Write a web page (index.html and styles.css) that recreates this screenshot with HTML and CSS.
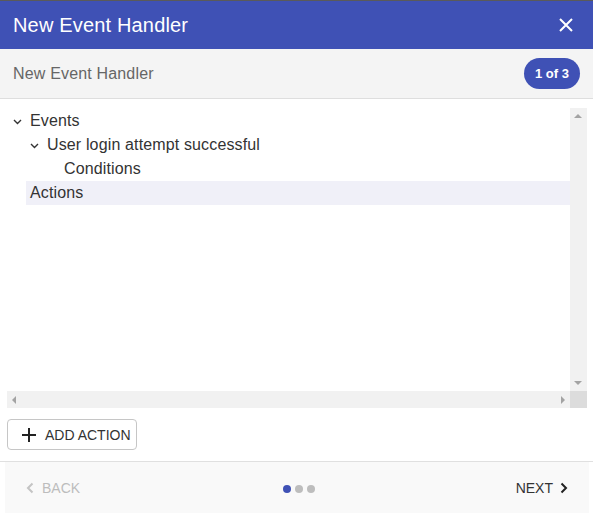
FILE: index.html
```html
<!DOCTYPE html>
<html>
<head>
<meta charset="utf-8">
<link rel="stylesheet" href="styles.css">
</head>
<body>
<div class="dialog">
  <header class="titlebar">
    <h1 class="title">New Event Handler</h1>
    <button class="close" aria-label="Close">
      <svg width="16" height="16" viewBox="0 0 16 16"><path d="M2 2 L14 14 M14 2 L2 14" stroke="#fff" stroke-width="2" fill="none"/></svg>
    </button>
  </header>
  <div class="subbar">
    <span class="subtitle">New Event Handler</span>
    <span class="badge">1 of 3</span>
  </div>
  <div class="content">
    <div class="scrollbox">
      <div class="tree">
        <div class="row lvl0">
          <span class="toggle"><svg width="9" height="6" viewBox="0 0 9 6"><path d="M1 1 L4.5 4.5 L8 1" stroke="#333" stroke-width="1.4" fill="none"/></svg></span>
          <span class="label">Events</span>
        </div>
        <div class="row lvl1">
          <span class="toggle"><svg width="9" height="6" viewBox="0 0 9 6"><path d="M1 1 L4.5 4.5 L8 1" stroke="#333" stroke-width="1.4" fill="none"/></svg></span>
          <span class="label">User login attempt successful</span>
        </div>
        <div class="row lvl2">
          <span class="toggle"></span>
          <span class="label">Conditions</span>
        </div>
        <div class="row lvl0">
          <span class="toggle"></span>
          <span class="label selected">Actions</span>
        </div>
      </div>
      <div class="vbar">
        <span class="arrow up"></span>
        <span class="arrow down"></span>
      </div>
      <div class="hbar">
        <span class="arrow left"></span>
        <span class="arrow right"></span>
      </div>
      <div class="corner"></div>
    </div>
    <div class="actions">
      <button class="add-btn">
        <svg width="14" height="14" viewBox="0 0 14 14"><path d="M7 0 V14 M0 7 H14" stroke="#222" stroke-width="2" fill="none"/></svg>
        <span>ADD ACTION</span>
      </button>
    </div>
  </div>
  <footer class="footer">
    <div class="footer-inner">
      <button class="nav back">
        <svg width="8" height="12" viewBox="0 0 8 12"><path d="M6.5 1.5 L2 6 L6.5 10.5" stroke="#c4c4c4" stroke-width="2" fill="none"/></svg>
        <span>BACK</span>
      </button>
      <div class="dots">
        <span class="dot active"></span>
        <span class="dot"></span>
        <span class="dot"></span>
      </div>
      <button class="nav next">
        <span>NEXT</span>
        <svg width="8" height="12" viewBox="0 0 8 12"><path d="M1.5 1.5 L6 6 L1.5 10.5" stroke="#222" stroke-width="2" fill="none"/></svg>
      </button>
    </div>
  </footer>
</div>
</body>
</html>
```

FILE: styles.css
```css
* { box-sizing: border-box; }
html, body { margin: 0; padding: 0; background: #fff; }
body {
  font-family: "Liberation Sans", Arial, sans-serif;
  color: #333;
  width: 593px;
  height: 513px;
  overflow: hidden;
}
.dialog {
  display: flex;
  flex-direction: column;
  height: 513px;
  border-top: 1px solid #5a5a5a;
}
.titlebar {
  background: #3f51b5;
  height: 48px;
  display: flex;
  align-items: center;
  justify-content: space-between;
  padding: 0 19px 0 13px;
}
.title {
  margin: 0;
  font-size: 20px;
  font-weight: normal;
  color: #fff;
  line-height: 1;
  padding-bottom: 1px;
  letter-spacing: 0.17px;
}
.close {
  background: none;
  border: 0;
  padding: 0;
  width: 16px;
  height: 16px;
  display: flex;
}
.subbar {
  background: #f4f4f4;
  height: 50px;
  border-bottom: 1px solid #dedede;
  display: flex;
  align-items: center;
  justify-content: space-between;
  padding: 0 13px;
}
.subtitle { font-size: 16px; color: #666; letter-spacing: 0.17px; }
.badge {
  background: #3f51b5;
  color: #fff;
  font-size: 13px;
  font-weight: bold;
  height: 31px;
  width: 56px;
  border-radius: 16px;
  display: flex;
  align-items: center;
  justify-content: center;
}
.content { padding: 9px 6px 0 7px; }
.scrollbox {
  display: grid;
  grid-template-columns: 563px 17px;
  grid-template-rows: 283px 17px;
  width: 580px;
}
.tree { padding: 1px 0 0 2px; overflow: hidden; }
.row {
  display: flex;
  height: 24px;
  align-items: stretch;
  font-size: 16px;
  letter-spacing: 0.14px;
}
.lvl1 { padding-left: 17px; }
.lvl2 { padding-left: 34px; }
.toggle {
  width: 17px;
  flex: none;
  display: flex;
  align-items: center;
  justify-content: center;
  padding-top: 1px;
}
.label {
  display: flex;
  align-items: center;
  padding: 0 4px;
  color: #333;
}
.label.selected {
  background: #f0f0f8;
  flex: 1;
}
.vbar, .hbar { background: #f1f1f1; position: relative; }
.corner { background: #dcdcdc; }
.arrow { position: absolute; width: 0; height: 0; }
.arrow.up {
  top: 6px; left: 4px;
  border-left: 4px solid transparent;
  border-right: 4px solid transparent;
  border-bottom: 4px solid #a3a3a3;
}
.arrow.down {
  bottom: 6px; left: 4px;
  border-left: 4px solid transparent;
  border-right: 4px solid transparent;
  border-top: 4px solid #a3a3a3;
}
.arrow.left {
  top: 5px; left: 5px;
  border-top: 4px solid transparent;
  border-bottom: 4px solid transparent;
  border-right: 4px solid #a3a3a3;
}
.arrow.right {
  top: 5px; right: 5px;
  border-top: 4px solid transparent;
  border-bottom: 4px solid transparent;
  border-left: 4px solid #a3a3a3;
}
.actions {
  padding: 11px 0 11px 7px;
  border-bottom: 1px solid #e0e0e0;
  margin: 0 -6px 0 -7px;
}
.add-btn {
  display: flex;
  align-items: center;
  gap: 9px;
  height: 31px;
  width: 130px;
  padding: 0 0 0 14px;
  background: #fff;
  border: 1px solid #c6c6c6;
  border-radius: 4px;
  font-family: "Liberation Sans", Arial, sans-serif;
  font-size: 14px;
  color: #333;
}
.footer { flex: 1; padding: 0 4px 0 5px; }
.footer-inner {
  background: #f9f9f9;
  height: 100%;
  display: flex;
  align-items: center;
  justify-content: space-between;
  padding: 0 21px 0 21px;
}
.nav {
  display: flex;
  align-items: center;
  gap: 8px;
  background: none;
  border: 0;
  padding: 0;
  font-family: "Liberation Sans", Arial, sans-serif;
  font-size: 14px;
}
.nav.back { color: #bdbdbd; }
.nav.next { color: #333; gap: 7px; }
.dots { display: flex; gap: 4px; padding-top: 2px; margin-left: 2px; }
.dot {
  width: 8px;
  height: 8px;
  border-radius: 50%;
  background: #bdbdbd;
}
.dot.active { background: #3f51b5; }
```
